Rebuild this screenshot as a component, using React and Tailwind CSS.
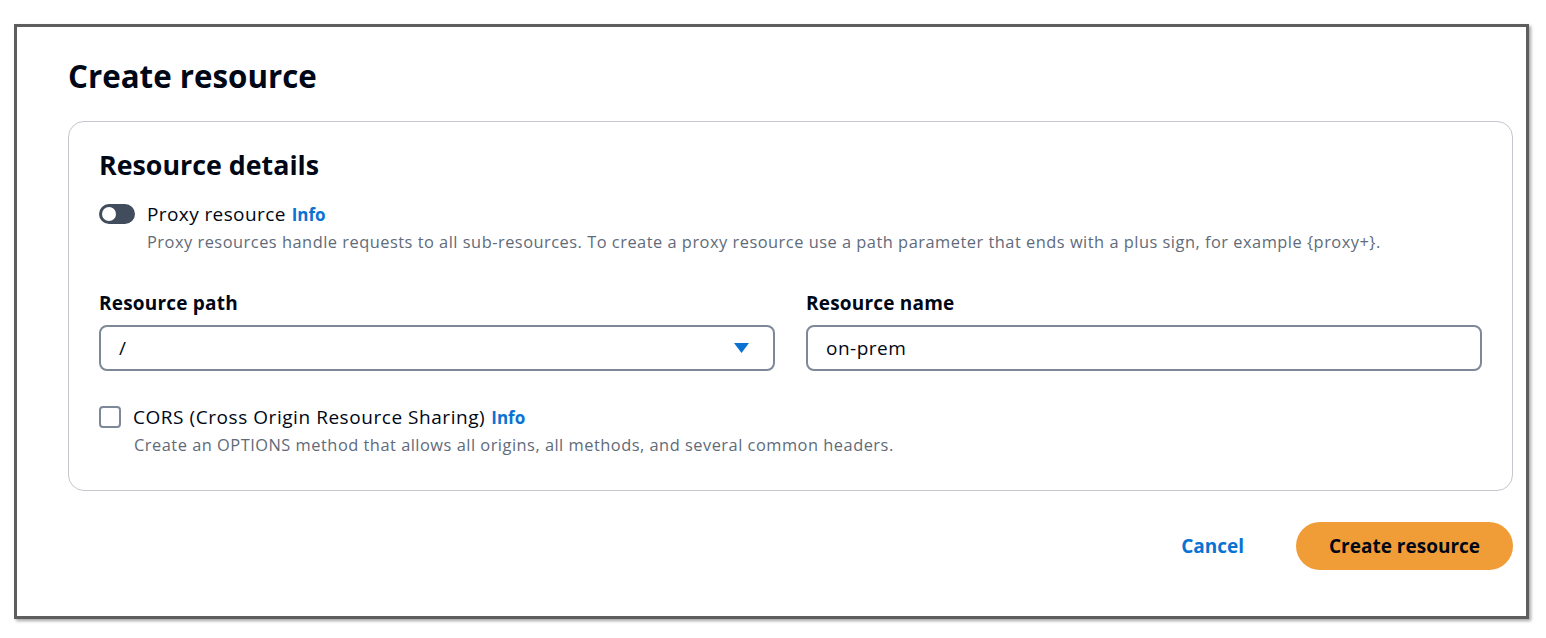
import * as React from "react";

const font = { fontFamily: '"Open Sans", "Noto Sans", Arial, sans-serif' };

// ---------- Info link ----------
function InfoLink() {
  return (
    <span className="ml-[6px] text-[17px] font-bold tracking-normal text-[#0972d3]">Info</span>
  );
}

// ---------- Toggle ----------
function Toggle() {
  return (
    <span className="flex h-[20px] w-[36px] shrink-0 items-center rounded-full bg-[#414d5c] px-[3px]">
      <span className="h-[14px] w-[14px] rounded-full bg-white" />
    </span>
  );
}

// ---------- Field ----------
function Field({ label, children }) {
  return (
    <div className="flex flex-1 flex-col">
      <div className="h-[24px] text-[19px] font-bold leading-[24px] tracking-[0.2px] text-[#000716]">
        {label}
      </div>
      <div className="mt-[10px] flex h-[46px] items-center rounded-[8px] border-2 border-[#7d8998] bg-white pl-[18px] pr-[24px] text-[19px] tracking-[0.5px] text-[#000716]">
        {children}
      </div>
    </div>
  );
}

export default function App() {
  return (
    <div className="min-h-[638px] bg-white pl-[14px] pt-[24px]" style={font}>
      <div className="h-[595px] w-[1515px] border-[3px] border-[#5e5e5e] bg-white pl-[51px] pr-[13px] pt-[29px] shadow-[2px_2px_3px_rgba(0,0,0,0.35)]">
        <h1 className="h-[40px] text-[31.3px] font-bold leading-[40px] text-[#000716]">
          Create resource
        </h1>

        <div className="mt-[25px] rounded-[16px] border border-[#c6c6cd] px-[30px] pb-[35px] pt-[25px]">
          <h2 className="h-[36px] text-[26.8px] font-bold leading-[36px] text-[#000716]">
            Resource details
          </h2>

          <div className="mt-[19px] flex h-[24px] items-center gap-[12px]">
            <Toggle />
            <span className="text-[19px] leading-[24px] tracking-[0.4px] text-[#000716]">
              Proxy resource
              <InfoLink />
            </span>
          </div>
          <p className="ml-[48px] mt-[6px] text-[16.4px] font-medium leading-[20px] tracking-[0.5px] text-[#5f6b7a]">
            Proxy resources handle requests to all sub-resources. To create a proxy resource use a path parameter that ends with a plus sign, for example {"{proxy+}"}.
          </p>

          <div className="mt-[39px] flex gap-[31px]">
            <Field label="Resource path">
              <span className="flex-1">/</span>
              <svg width="15" height="10" viewBox="0 0 15 10">
                <path d="M0 0 H15 L7.5 10 Z" fill="#0972d3" />
              </svg>
            </Field>
            <Field label="Resource name">
              <span>on-prem</span>
            </Field>
          </div>

          <div className="mt-[34px] flex h-[24px] items-center gap-[12px]">
            <span className="h-[22px] w-[22px] shrink-0 rounded-[4px] border-2 border-[#7d8998] bg-white" />
            <span className="text-[19px] leading-[24px] tracking-[0.55px] text-[#000716]">
              CORS (Cross Origin Resource Sharing)
              <InfoLink />
            </span>
          </div>
          <p className="ml-[35px] mt-[6px] text-[16.4px] font-medium leading-[20px] tracking-[0.5px] text-[#5f6b7a]">
            Create an OPTIONS method that allows all origins, all methods, and several common headers.
          </p>
        </div>

        <div className="mt-[31px] flex items-center justify-end">
          <button className="mr-[52px] text-[19px] font-bold text-[#0972d3]">
            Cancel
          </button>
          <button className="flex h-[48px] w-[217px] items-center justify-center rounded-full bg-[#f09d38] text-[19px] font-bold text-[#000716]">
            Create resource
          </button>
        </div>
      </div>
    </div>
  );
}
